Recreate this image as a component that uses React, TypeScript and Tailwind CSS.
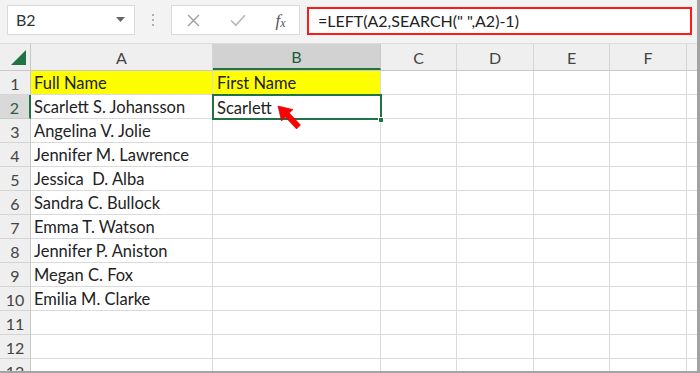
import React from "react";

const cols = [
  { k: "A", w: "w-[182px]" },
  { k: "B", w: "w-[168px]" },
  { k: "C", w: "w-[76px]" },
  { k: "D", w: "w-[77px]" },
  { k: "E", w: "w-[76px]" },
  { k: "F", w: "w-[77px]" },
];

const names = [
  "Full Name",
  "Scarlett S. Johansson",
  "Angelina V. Jolie",
  "Jennifer M. Lawrence",
  "Jessica  D. Alba",
  "Sandra C. Bullock",
  "Emma T. Watson",
  "Jennifer P. Aniston",
  "Megan C. Fox",
  "Emilia M. Clarke",
  "",
  "",
  "",
];

export default function App() {
  const font = { fontFamily: "Lato, 'Open Sans', sans-serif" };
  return (
    <div
      className="relative w-[700px] h-[373px] overflow-hidden bg-white border-r-[3px] border-b-[2px] border-[#a3a3a3] flex flex-col"
      style={font}
    >
      {/* toolbar */}
      <div className="h-[44px] shrink-0 bg-[#f3f3f3] border-b border-[#dcdcdc] flex items-start pt-[5px]">
        <div className="ml-[7px] w-[128px] h-[30px] bg-white border border-[#dadada] flex items-center justify-between pl-[8px] pr-[9px]">
          <span className="text-[16px] text-[#333]">B2</span>
          <svg width="9" height="6" viewBox="0 0 9 6">
            <path d="M0 0 H9 L4.5 5 Z" fill="#666" />
          </svg>
        </div>
        <div className="w-[36px] h-[30px] flex flex-col items-center justify-center gap-[3px]">
          <div className="w-[2px] h-[2px] bg-[#b0b0b0]" />
          <div className="w-[2px] h-[2px] bg-[#b0b0b0]" />
          <div className="w-[2px] h-[2px] bg-[#b0b0b0]" />
        </div>
        <div className="w-[129px] h-[30px] bg-white border border-[#dadada] flex items-center">
          <div className="w-[42px] flex justify-center">
            <svg width="13" height="13" viewBox="0 0 12 12">
              <path d="M1 1 L11 11 M11 1 L1 11" stroke="#a0a0a0" strokeWidth="1.3" />
            </svg>
          </div>
          <div className="w-[48px] flex justify-center">
            <svg width="16" height="13" viewBox="0 0 15 12">
              <path d="M1 6 L5.5 10.5 L14 1" stroke="#b8b8b8" strokeWidth="1.5" fill="none" />
            </svg>
          </div>
          <div className="w-[37px] flex justify-center items-end text-[#555]" style={{ fontFamily: "'Liberation Serif', serif" }}>
            <span className="italic text-[17px] leading-none">f</span>
            <span className="italic text-[12px] leading-none">x</span>
          </div>
        </div>
        <div className="ml-[7px] mt-[2px] w-[385px] h-[28px] border-2 border-[#ff1a1a] bg-white flex items-center pl-[9px]">
          <span className="text-[16px] text-[#222] whitespace-pre">=LEFT(A2,SEARCH(" ",A2)-1)</span>
        </div>
      </div>

      {/* column headers */}
      <div className="h-[27px] shrink-0 flex bg-[#efefef] border-b border-[#c8c8c8]">
        <div className="w-[31px] shrink-0 border-r border-[#c8c8c8] flex items-end justify-end pr-[4px] pb-[5px]">
          <svg width="15" height="15" viewBox="0 0 15 15">
            <path d="M15 0 V15 H0 Z" fill="#217346" />
          </svg>
        </div>
        {cols.map((c) =>
          c.k === "B" ? (
            <div
              key={c.k}
              className={`${c.w} shrink-0 bg-[#d2d2d2] border-r border-[#c8c8c8] border-b-2 border-b-[#217346] flex items-center justify-center pt-[2px] text-[16px] text-[#1f5c3a]`}
            >
              {c.k}
            </div>
          ) : (
            <div
              key={c.k}
              className={`${c.w} shrink-0 border-r border-[#d4d4d4] flex items-center justify-center pt-[2px] text-[16px] text-[#444]`}
            >
              {c.k}
            </div>
          )
        )}
        <div className="flex-1" />
      </div>

      {/* rows */}
      <div className="flex flex-col">
        {names.map((n, i) => {
          const r = i + 1;
          const sel = r === 2;
          return (
            <div key={r} className="h-[24px] shrink-0 flex">
              <div
                className={
                  sel
                    ? "w-[31px] shrink-0 bg-[#d9d9d9] border-r-2 border-r-[#217346] border-b border-[#c8c8c8] flex items-center justify-center pt-[2px] text-[16px] text-[#2d5e44]"
                    : "w-[31px] shrink-0 bg-[#efefef] border-r border-[#c8c8c8] border-b border-b-[#d4d4d4] flex items-center justify-center pt-[2px] text-[16px] text-[#444]"
                }
              >
                {r}
              </div>
              <div
                className={`w-[182px] shrink-0 border-r border-b border-[#dadada] flex items-center pl-[3px] pt-[2px] text-[16.5px] text-[#222] whitespace-pre ${
                  r === 1 ? "bg-[#ffff00]" : ""
                }`}
              >
                {n}
              </div>
              <div
                className={`w-[168px] shrink-0 border-r border-b border-[#dadada] flex items-center pl-[4px] pt-[2px] text-[16.5px] text-[#222] ${
                  r === 1 ? "bg-[#ffff00]" : ""
                }`}
              >
                {r === 1 ? "First Name" : ""}
              </div>
              <div className="w-[76px] shrink-0 border-r border-b border-[#dadada]" />
              <div className="w-[77px] shrink-0 border-r border-b border-[#dadada]" />
              <div className="w-[76px] shrink-0 border-r border-b border-[#dadada]" />
              <div className="w-[77px] shrink-0 border-r border-b border-[#dadada]" />
              <div className="flex-1 border-b border-[#dadada]" />
            </div>
          );
        })}
      </div>

      {/* selected cell B2 */}
      <div className="absolute left-[212px] top-[94px] w-[170px] h-[26px] border-2 border-[#217346] flex items-center pl-[3px] pt-[2px] text-[16.5px] text-[#222] bg-white">
        Scarlett
      </div>
      <div className="absolute left-[378px] top-[117px] w-[6px] h-[6px] bg-[#217346] border border-white" />

      {/* red arrow */}
      <svg className="absolute left-[272px] top-[101px]" width="34" height="34" viewBox="0 0 34 34">
        <polygon
          points="6,5 21,8.5 17.3,12 28.5,24 24.5,28 13.3,16 9.5,20"
          fill="#ff0000"
          stroke="#c00000"
          strokeWidth="0.6"
        />
      </svg>
    </div>
  );
}
